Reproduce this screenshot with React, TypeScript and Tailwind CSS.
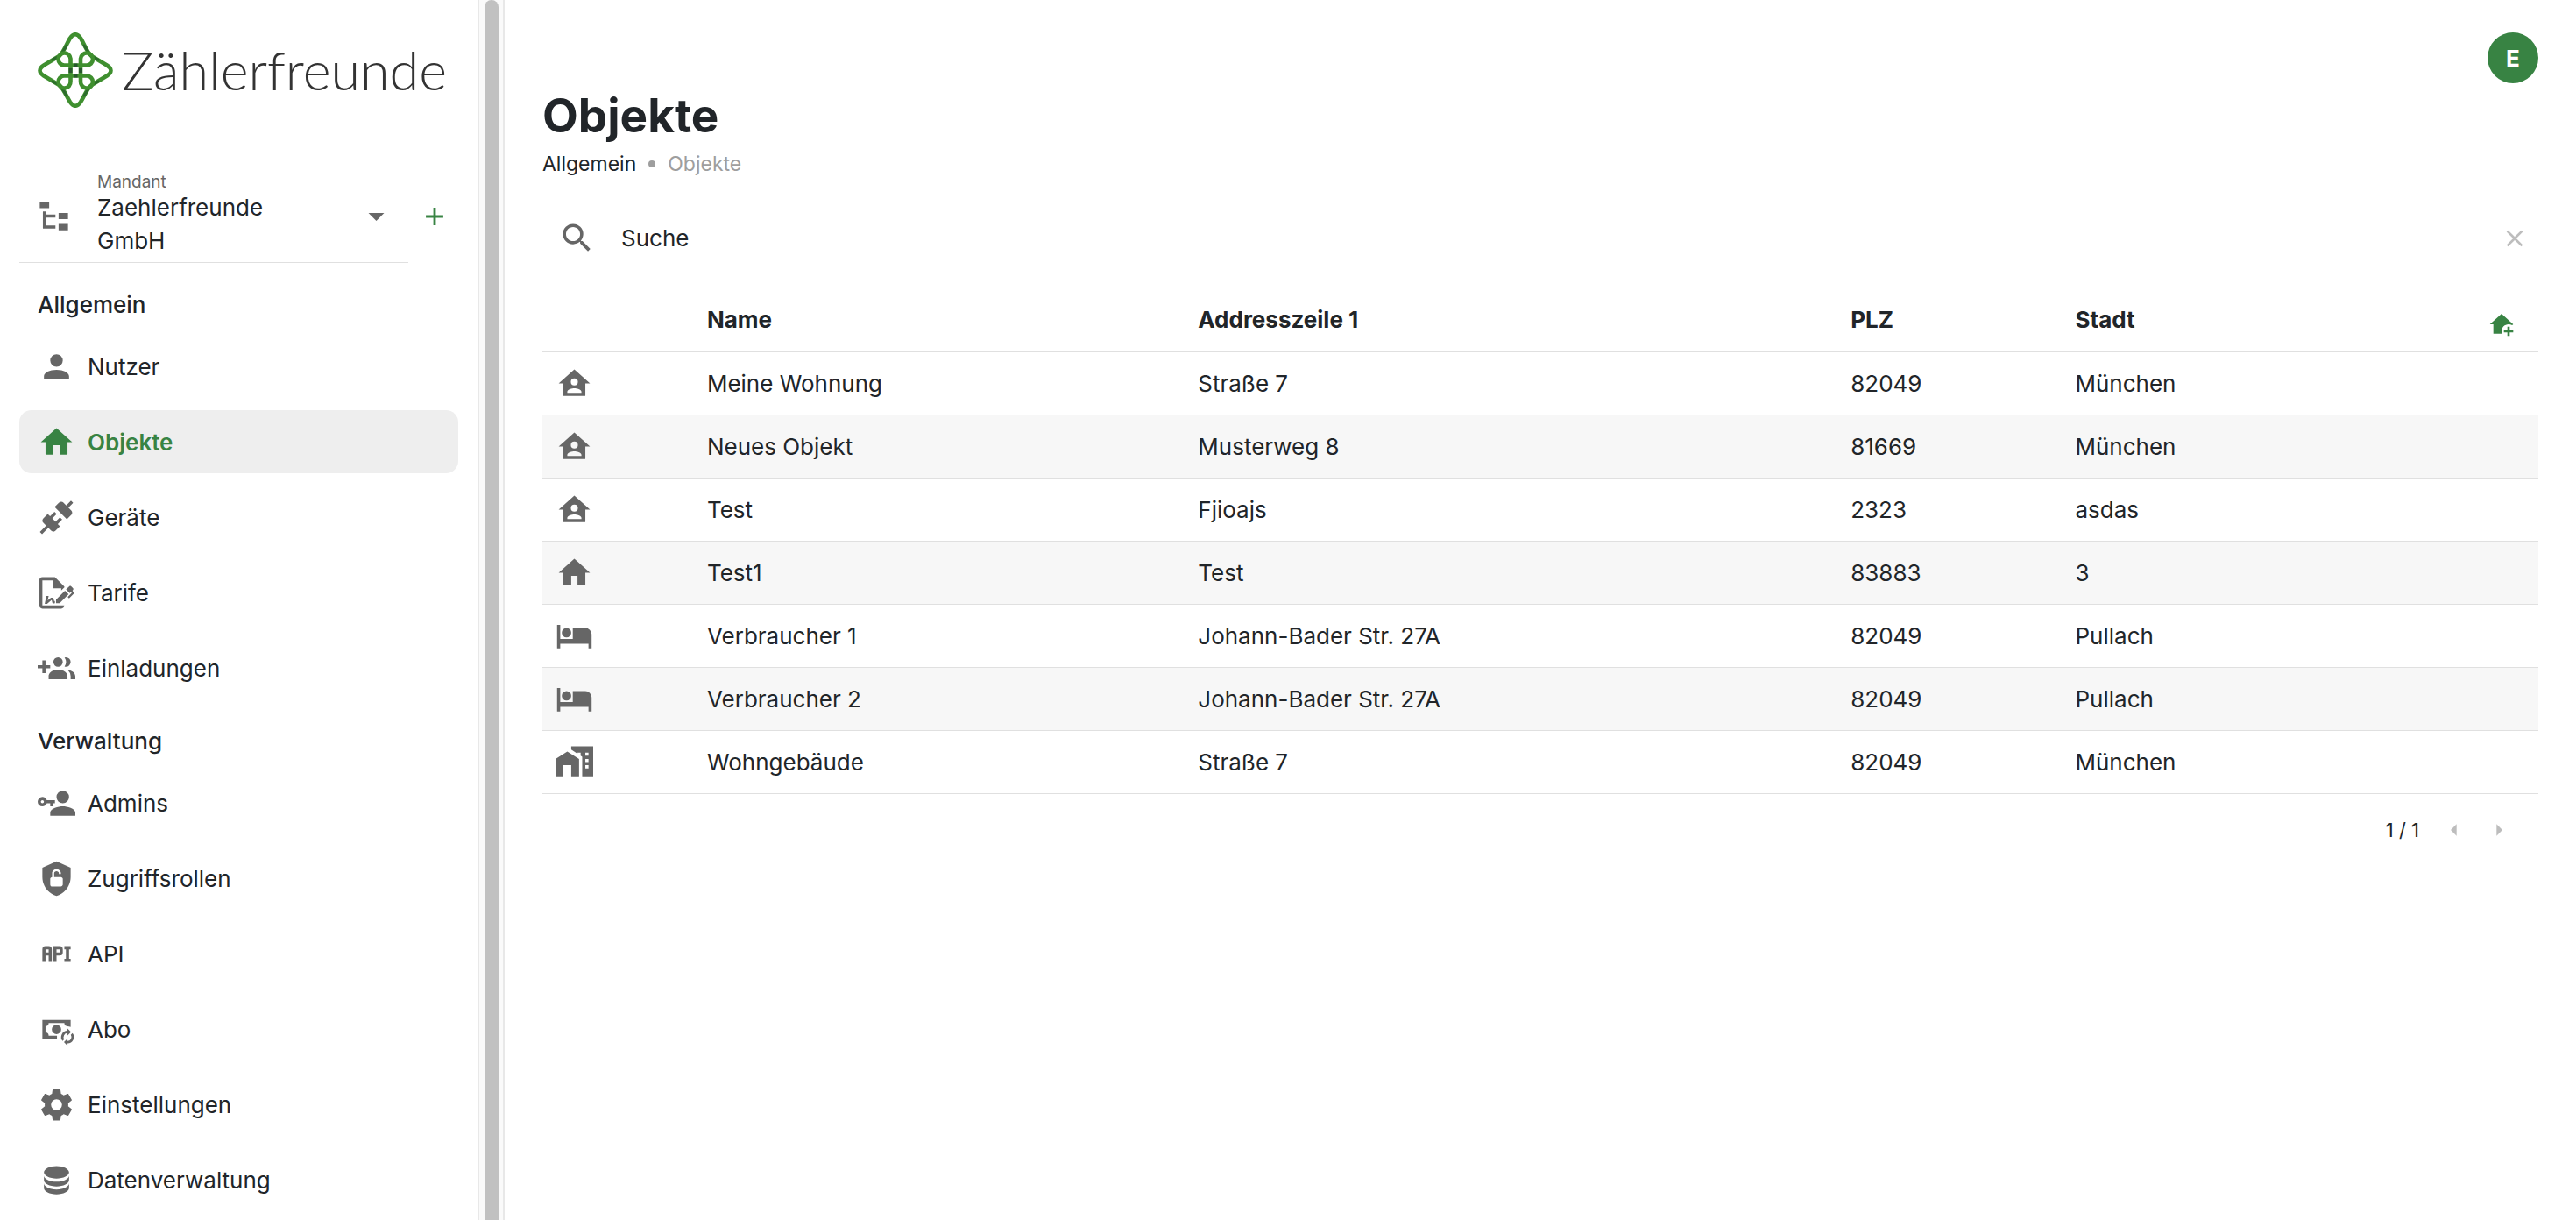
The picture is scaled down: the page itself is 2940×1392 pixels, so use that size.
import React, { useState } from "react";

const icons = {
  fileTree:
    "M3,3H9V7H3V3M15,10H21V14H15V10M15,17H21V21H15V17M13,13H7V18H13V20H7L5,20V9H7V11H13V13Z",
  menuDown: "M7,10L12,15L17,10H7Z",
  menuLeft: "M14,7L9,12L14,17V7Z",
  menuRight: "M10,17L15,12L10,7V17Z",
  plus: "M19,13H13V19H11V13H5V11H11V5H13V11H19V13Z",
  close:
    "M19,6.41L17.59,5L12,10.59L6.41,5L5,6.41L10.59,12L5,17.59L6.41,19L12,13.41L17.59,19L19,17.59L13.41,12L19,6.41Z",
  magnify:
    "M9.5,3A6.5,6.5 0 0,1 16,9.5C16,11.11 15.41,12.59 14.44,13.73L14.71,14H15.5L20.5,19L19,20.5L14,15.5V14.71L13.73,14.44C12.59,15.41 11.11,16 9.5,16A6.5,6.5 0 0,1 3,9.5A6.5,6.5 0 0,1 9.5,3M9.5,5C7,5 5,7 5,9.5C5,12 7,14 9.5,14C12,14 14,12 14,9.5C14,7 12,5 9.5,5Z",
  account:
    "M12,4A4,4 0 0,1 16,8A4,4 0 0,1 12,12A4,4 0 0,1 8,8A4,4 0 0,1 12,4M12,14C16.42,14 20,15.79 20,18V20H4V18C4,15.79 7.58,14 12,14Z",
  home: "M10,20V14H14V20H19V12H22L12,3L2,12H5V20H10Z",
  connection:
    "M21.4 7.5C22.2 8.3 22.2 9.6 21.4 10.3L18.6 13.1L10.8 5.3L13.6 2.5C14.4 1.7 15.7 1.7 16.4 2.5L18.2 4.3L21.2 1.3L22.6 2.7L19.6 5.7L21.4 7.5M15.6 13.3L14.2 11.9L11.4 14.7L9.3 12.6L12.1 9.8L10.7 8.4L7.9 11.2L6.4 9.8L3.6 12.6C2.8 13.4 2.8 14.7 3.6 15.4L5.4 17.2L1.4 21.2L2.8 22.6L6.8 18.6L8.6 20.4C9.4 21.2 10.7 21.2 11.4 20.4L14.2 17.6L12.8 16.2L15.6 13.3Z",
  fileSign:
    "M19.7 12.9L14 18.6H11.7V16.3L17.4 10.6L19.7 12.9M23.1 12.1C23.1 12.4 22.8 12.7 22.5 13L20 15.5L19.1 14.6L21.7 12L21.1 11.4L20.4 12.1L18.1 9.8L20.3 7.7C20.5 7.5 20.9 7.5 21.2 7.7L22.6 9.1C22.8 9.3 22.8 9.7 22.6 10C22.4 10.2 22.2 10.4 22.2 10.6C22.2 10.8 22.4 11 22.6 11.2C22.9 11.5 23.2 11.8 23.1 12.1M3 20V4H10V9H15V10.5L17 8.5V8L11 2H3C1.9 2 1 2.9 1 4V20C1 21.1 1.9 22 3 22H15C16.1 22 17 21.1 17 20H3M11 17.1C10.8 17.1 10.6 17.2 10.5 17.2L10 15H8.5L6.4 16.7L7 14H5.5L4.5 19H6L8.9 16.4L9.5 18.7H10.5L11 18.6V17.1Z",
  accountMultiplePlus:
    "M19 17V19H7V17S7 13 13 13 19 17 19 17M16 8A3 3 0 1 0 13 11A3 3 0 0 0 16 8M19.2 13.06A5.6 5.6 0 0 1 21 17V19H24V17S24 13.55 19.2 13.06M18 5A2.91 2.91 0 0 0 17.11 5.14A5 5 0 0 1 17.11 10.86A2.91 2.91 0 0 0 18 11A3 3 0 0 0 18 5M8 10H5V7H3V10H0V12H3V15H5V12H8Z",
  accountKey:
    "M11 10V12H10V14H8V12H5.83C5.42 13.17 4.31 14 3 14A3 3 0 0 1 0 11A3 3 0 0 1 3 8C4.31 8 5.42 8.83 5.83 10H11M3 10A1 1 0 0 0 2 11A1 1 0 0 0 3 12A1 1 0 0 0 4 11A1 1 0 0 0 3 10M16 14C18.67 14 24 15.34 24 18V20H8V18C8 15.34 13.33 14 16 14M16 12A4 4 0 0 1 12 8A4 4 0 0 1 16 4A4 4 0 0 1 20 8A4 4 0 0 1 16 12Z",
  shieldLockOpen:
    "M12 1L3 5V11C3 16.5 6.8 21.7 12 23C17.2 21.7 21 16.5 21 11V5L12 1M16 15.8C16 16.4 15.4 17 14.7 17H9.2C8.6 17 8 16.4 8 15.7V12.2C8 11.6 8.6 11 9.2 11V8.5C9.2 7.1 10.6 6 12 6S14.8 7.1 14.8 8.5V9H13.5V8.5C13.5 7.7 12.8 7.2 12 7.2S10.5 7.7 10.5 8.5V11H14.8C15.4 11 16 11.6 16 12.2V15.8Z",
  api: "M7 7H5A2 2 0 0 0 3 9V17H5V13H7V17H9V9A2 2 0 0 0 7 7M7 11H5V9H7M14 7H10V17H12V13H14A2 2 0 0 0 16 11V9A2 2 0 0 0 14 7M14 11H12V9H14M20 9V15H21V17H17V15H18V9H17V7H21V9Z",
  cashSync:
    "M12 15A3 3 0 1 1 12 9A3 3 0 0 1 12 15M3 6H21V10.5A6 6 0 0 0 19 10A2 2 0 0 1 17 8H7A2 2 0 0 1 5 10V14A2 2 0 0 1 7 16H12.3L12.3 18H3V6M19 12.9V11.4L21.25 13.65L19 15.9V14.4A2.5 2.5 0 0 0 16.92 18.29L15.83 19.4A4 4 0 0 1 19 12.9M19 19.4A2.5 2.5 0 0 0 21.08 15.51L22.17 14.4A4 4 0 0 1 19 20.9V22.4L16.75 20.15L19 17.9V19.4Z",
  cog: "M12,15.5A3.5,3.5 0 0,1 8.5,12A3.5,3.5 0 0,1 12,8.5A3.5,3.5 0 0,1 15.5,12A3.5,3.5 0 0,1 12,15.5M19.43,12.97C19.47,12.65 19.5,12.33 19.5,12C19.5,11.67 19.47,11.34 19.43,11L21.54,9.37C21.73,9.22 21.78,8.95 21.66,8.73L19.66,5.27C19.54,5.05 19.27,4.96 19.05,5.05L16.56,6.05C16.04,5.66 15.5,5.32 14.87,5.07L14.5,2.42C14.46,2.18 14.25,2 14,2H10C9.75,2 9.54,2.18 9.5,2.42L9.13,5.07C8.5,5.32 7.96,5.66 7.44,6.05L4.95,5.05C4.73,4.96 4.46,5.05 4.34,5.27L2.34,8.73C2.21,8.95 2.27,9.22 2.46,9.37L4.57,11C4.53,11.34 4.5,11.67 4.5,12C4.5,12.33 4.53,12.65 4.57,12.97L2.46,14.63C2.27,14.78 2.21,15.05 2.34,15.27L4.34,18.73C4.46,18.95 4.73,19.03 4.95,18.95L7.44,17.94C7.96,18.34 8.5,18.68 9.13,18.93L9.5,21.58C9.54,21.82 9.75,22 10,22H14C14.25,22 14.46,21.82 14.5,21.58L14.87,18.93C15.5,18.67 16.04,18.34 16.56,17.94L19.05,18.95C19.27,19.03 19.54,18.95 19.66,18.73L21.66,15.27C21.78,15.05 21.73,14.78 21.54,14.63L19.43,12.97Z",
  database:
    "M12,3C7.58,3 4,4.79 4,7C4,9.21 7.58,11 12,11C16.42,11 20,9.21 20,7C20,4.79 16.42,3 12,3M4,9V12C4,14.21 7.58,16 12,16C16.42,16 20,14.21 20,12V9C20,11.21 16.42,13 12,13C7.58,13 4,11.21 4,9M4,14V17C4,19.21 7.58,21 12,21C16.42,21 20,19.21 20,17V14C20,16.21 16.42,18 12,18C7.58,18 4,16.21 4,14Z",
  homeAccount:
    "M12,3L2,12H5V20H19V12H22L12,3M12,8.75A2.25,2.25 0 0,1 14.25,11A2.25,2.25 0 0,1 12,13.25A2.25,2.25 0 0,1 9.75,11A2.25,2.25 0 0,1 12,8.75M12,15C13.5,15 16.5,15.75 16.5,17.25V18H7.5V17.25C7.5,15.75 10.5,15 12,15Z",
  homePlus:
    "M17 14H19V17H22V19H19V22H17V19H14V17H17V14M12 3L2 12H5V20H12.35C12.13 19.37 12 18.7 12 18C12 14.69 14.69 12 18 12C19.12 12 20.18 12.31 21.08 12.84L22 12L12 3Z",
  bed: "M19,7H11V14H3V5H1V20H3V17H21V20H23V11A4,4 0 0,0 19,7M7,13A3,3 0 0,0 10,10A3,3 0 0,0 7,7A3,3 0 0,0 4,10A3,3 0 0,0 7,13Z",
  homeCity:
    "M0 21V10L7.5 5.3L15 10V21H10V14H5V21H0M10 2H24V21H17V8.7L16 8V6H14V6.7L10 4V2M19 6V8H21V6H19M19 10V12H21V10H19M19 14V16H21V14H19Z",
};

type IconName = keyof typeof icons;

function Icon({ name, className }: { name: IconName; className: string }) {
  return (
    <svg viewBox="0 0 24 24" fill="currentColor" fillRule="evenodd" aria-hidden="true" className={className}>
      <path d={icons[name]} />
    </svg>
  );
}

function LogoMark() {
  return (
    <svg viewBox="0 0 86 86" fill="none" stroke="#3f8f2f" aria-hidden="true" className="size-[86px] shrink-0">
      <path
        strokeWidth="4.6"
        d="M37 6.5Q43 -2 49 6.5C53 13 57 24 61.5 27L79 37.5Q88 43.5 79 49.5L61.5 60C57 63 53 73 49 79.5Q43 88 37 79.5C33 73 29 63 24.5 60L7 49.5Q-2 43.5 7 37.5L24.5 27C29 24 33 13 37 6.5Z"
      />
      <path
        stroke="#2c6b2c"
        strokeWidth="3"
        strokeLinecap="round"
        d="M33 15L26 26M53 15L60 26M17 31L25 27M69 31L61 27M17 56L25 60M69 56L61 60M33 72L26 61M53 72L60 61"
      />
      <path
        strokeWidth="4.6"
        d="M37.5 30A7 7 0 1 0 30.5 37.5H56A7 7 0 1 0 49 30V56A7 7 0 1 0 56 49.5H30.5A7 7 0 1 0 37.5 56Z"
      />
      <path stroke="#27582d" strokeWidth="4" d="M41 37.5H45.5M41 49.5H45.5M37.5 41V46M49 41V46" />
    </svg>
  );
}

const general: { icon: IconName; label: string; active?: boolean }[] = [
  { icon: "account", label: "Nutzer" },
  { icon: "home", label: "Objekte", active: true },
  { icon: "connection", label: "Geräte" },
  { icon: "fileSign", label: "Tarife" },
  { icon: "accountMultiplePlus", label: "Einladungen" },
];

const administration: { icon: IconName; label: string; active?: boolean }[] = [
  { icon: "accountKey", label: "Admins" },
  { icon: "shieldLockOpen", label: "Zugriffsrollen" },
  { icon: "api", label: "API" },
  { icon: "cashSync", label: "Abo" },
  { icon: "cog", label: "Einstellungen" },
  { icon: "database", label: "Datenverwaltung" },
];

const rows: { icon: IconName; name: string; address: string; zip: string; city: string }[] = [
  { icon: "homeAccount", name: "Meine Wohnung", address: "Straße 7", zip: "82049", city: "München" },
  { icon: "homeAccount", name: "Neues Objekt", address: "Musterweg 8", zip: "81669", city: "München" },
  { icon: "homeAccount", name: "Test", address: "Fjioajs", zip: "2323", city: "asdas" },
  { icon: "home", name: "Test1", address: "Test", zip: "83883", city: "3" },
  { icon: "bed", name: "Verbraucher 1", address: "Johann-Bader Str. 27A", zip: "82049", city: "Pullach" },
  { icon: "bed", name: "Verbraucher 2", address: "Johann-Bader Str. 27A", zip: "82049", city: "Pullach" },
  { icon: "homeCity", name: "Wohngebäude", address: "Straße 7", zip: "82049", city: "München" },
];

function NavList({ items }: { items: typeof general }) {
  return (
    <ul className="flex flex-col gap-[14px]">
      {items.map((item) => (
        <li key={item.label}>
          <a
            href="#"
            aria-current={item.active ? "page" : undefined}
            className={
              item.active
                ? "flex h-[72px] items-center gap-[14px] rounded-[14px] bg-[#eeeeee] pl-[21px] font-semibold text-[#388343]"
                : "flex h-[72px] items-center gap-[14px] rounded-[14px] pl-[21px]"
            }
          >
            <Icon name={item.icon} className={item.active ? "size-[43px]" : "size-[43px] text-[#666666]"} />
            {item.label}
          </a>
        </li>
      ))}
    </ul>
  );
}

function Sidebar() {
  return (
    <aside className="flex shrink-0">
      <div className="w-[545px] pt-[37px] pr-[22px] pl-[22px]">
        <a href="#" className="flex h-[86px] items-center gap-[10px] pl-[21px]">
          <LogoMark />
          <span className="font-['Lato'] text-[61px] leading-[82px] font-light text-[#333333]">Zählerfreunde</span>
        </a>

        <div className="mt-[70px] flex">
          <div className="relative flex h-[107px] w-[444px] items-center border-b border-[#e0e0e0] pl-[18px] has-[:focus-visible]:border-[#388343]">
            <Icon name="fileTree" className="size-[43px] shrink-0 text-[#666666]" />
            <div className="ml-[28px] flex-1" aria-hidden="true">
              <div className="text-[19px] leading-[20px] text-[#666666]">Mandant</div>
              <div className="w-[200px] leading-[38px]">Zaehlerfreunde GmbH</div>
            </div>
            <Icon name="menuDown" className="mr-[15px] size-[43px] text-[#666666]" />
            <select aria-label="Mandant" className="absolute inset-0 size-full opacity-0">
              <option>Zaehlerfreunde GmbH</option>
            </select>
          </div>
          <button type="button" aria-label="Mandant hinzufügen" className="ml-[13px] text-[#388343]">
            <Icon name="plus" className="size-[34px]" />
          </button>
        </div>

        <nav>
          <h2 className="flex h-[82px] items-end pb-[14px] pl-[21px] leading-[40px] font-medium">Allgemein</h2>
          <NavList items={general} />
          <h2 className="flex h-[82px] items-end pb-[14px] pl-[21px] leading-[40px] font-medium">Verwaltung</h2>
          <NavList items={administration} />
        </nav>
      </div>
      <div className="flex w-[31px] justify-center border-x-2 border-[#e8e8e8] bg-[#fafafa]">
        <div className="w-4 rounded-t-full bg-[#c1c1c1]" />
      </div>
    </aside>
  );
}

export default function App() {
  const [query, setQuery] = useState("");

  return (
    <div className="flex min-h-screen bg-white font-['Inter',sans-serif] text-[26px] text-[#212529]">
      <Sidebar />
      <main className="min-w-0 flex-1 px-[43px] pt-[37px]">
        <header className="flex items-start justify-between">
          <div className="pt-[63px]">
            <h1 className="text-[53px] leading-[64px] font-bold">Objekte</h1>
            <nav aria-label="Breadcrumb" className="flex items-center gap-[14px] pt-[7px] text-[23px] leading-[32px]">
              <a href="#">Allgemein</a>
              <span className="size-[8px] rounded-full bg-[#9e9e9e]" />
              <span className="text-[#9e9e9e]">Objekte</span>
            </nav>
          </div>
          <button
            type="button"
            aria-label="Benutzerkonto"
            className="size-[58px] rounded-full bg-[#388343] text-[26px] font-bold text-white"
          >
            E
          </button>
        </header>

        <div className="mt-[28px] flex items-center">
          <label className="flex h-[81px] flex-1 items-center gap-[29px] border-b border-[#e0e0e0] pl-[18px]">
            <Icon name="magnify" className="size-[43px] text-[#666666]" />
            <input
              type="text"
              aria-label="Suche"
              placeholder="Suche"
              value={query}
              onChange={(event) => setQuery(event.target.value)}
              className="flex-1 outline-none placeholder:text-[#212529] placeholder:opacity-100"
            />
          </label>
          <button
            type="button"
            aria-label="Suche löschen"
            onClick={() => setQuery("")}
            className="mr-[11px] ml-[22px] text-[#bdbdbd]"
          >
            <Icon name="close" className="size-[32px]" />
          </button>
        </div>

        <table className="mt-[17px] w-full table-fixed text-left">
          <thead>
            <tr className="h-[72px] border-b border-[#e0e0e0]">
              <th className="w-[8.25%]" aria-label="Typ" />
              <th className="w-[24.6%] font-bold">Name</th>
              <th className="w-[32.7%] font-bold">Addresszeile 1</th>
              <th className="w-[11.25%] font-bold">PLZ</th>
              <th className="font-bold">Stadt</th>
              <th className="w-[58px]">
                <button type="button" aria-label="Objekt hinzufügen" className="mt-[10px] block text-[#388343]">
                  <Icon name="homePlus" className="size-[32px]" />
                </button>
              </th>
            </tr>
          </thead>
          <tbody>
            {rows.map((row) => (
              <tr key={row.name} className="h-[72px] border-b border-[#e0e0e0] even:bg-[#f7f7f7]">
                <td className="pl-[15px]">
                  <Icon name={row.icon} className="size-[43px] text-[#666666]" />
                </td>
                <td>{row.name}</td>
                <td>{row.address}</td>
                <td>{row.zip}</td>
                <td colSpan={2}>{row.city}</td>
              </tr>
            ))}
          </tbody>
        </table>

        <div className="mt-[25px] flex items-center justify-end gap-[19px] pr-[29px] text-[22px]">
          <span className="mr-[5px]">1 / 1</span>
          <button type="button" aria-label="Vorherige Seite" disabled className="text-[#bdbdbd]">
            <Icon name="menuLeft" className="size-[32px]" />
          </button>
          <button type="button" aria-label="Nächste Seite" disabled className="text-[#bdbdbd]">
            <Icon name="menuRight" className="size-[32px]" />
          </button>
        </div>
      </main>
    </div>
  );
}
